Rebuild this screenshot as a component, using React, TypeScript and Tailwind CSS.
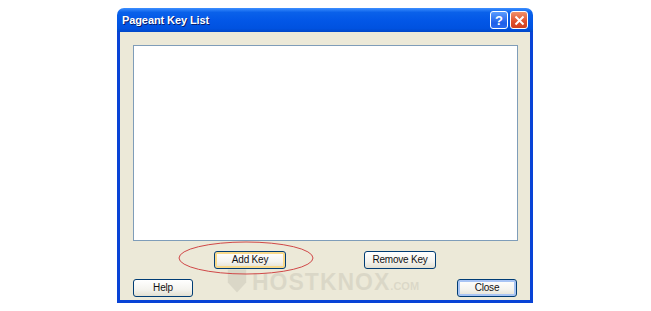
import React from "react";

const btn =
  "h-[18px] rounded-[3px] border border-[#003c74] bg-[linear-gradient(to_bottom,#ffffff_0%,#f4f3ee_60%,#e3e0d2_100%)] text-[10px] tracking-[-0.2px] text-[#111] flex items-center justify-center leading-none";

export default function App() {
  return (
    <div
      className="relative w-[651px] h-[311px] bg-white overflow-hidden"
      style={{ fontFamily: '"Liberation Sans", Arial, sans-serif' }}
    >
      <div className="relative ml-[117px] pt-[8px] w-[416px] h-[303px] flex flex-col">
        {/* Title bar */}
        <div className="h-[24px] rounded-t-[7px] bg-[linear-gradient(to_bottom,#3d8fff_0%,#0a61ea_18%,#0256e6_55%,#0052e0_85%,#0047c8_100%)] flex items-center pl-[5px] pr-[5px]">
          <span className="text-white font-bold text-[11px] tracking-[-0.1px] [text-shadow:1px_1px_0_#0a1e6e]">
            Pageant Key List
          </span>
          <div className="ml-auto flex gap-[2px]">
            <div className="w-[18px] h-[18px] rounded-[3px] border border-white bg-[linear-gradient(to_bottom,#5a9cff,#1e5ee8_70%,#2a6cf0)] flex items-center justify-center">
              <span className="text-white font-bold text-[13px] leading-none">?</span>
            </div>
            <div className="w-[18px] h-[18px] rounded-[3px] border border-white bg-[linear-gradient(to_bottom,#f0906a,#e0502c_60%,#d04020)] flex items-center justify-center">
              <svg width="11" height="11" viewBox="0 0 11 11">
                <path d="M1.5 1.5 L9.5 9.5 M9.5 1.5 L1.5 9.5" stroke="white" strokeWidth="2" />
              </svg>
            </div>
          </div>
        </div>
        {/* Body */}
        <div className="flex-1 border-x-[3px] border-b-[3px] border-[#0843d6] bg-[#ece9d8] flex flex-col pt-[13px] pl-[13px] pr-[12px]">
          <div className="w-[385px] h-[196px] bg-white border border-[#7f9db9]" />
          <div className="flex mt-[10px] pl-[81px] gap-[78px]">
            <div className={`${btn} w-[72px] shadow-[inset_0_0_0_2px_#f8d98a]`}>Add Key</div>
            <div className={`${btn} w-[72px]`}>Remove Key</div>
          </div>
          <div className="flex justify-between mt-[10px] pr-[1px]">
            <div className={`${btn} w-[60px]`}>Help</div>
            <div className={`${btn} w-[60px] shadow-[inset_0_0_0_2px_#a8c4f4]`}>Close</div>
          </div>
        </div>
      </div>

      {/* Watermark overlay */}
      <div className="absolute left-[226px] top-[268px] flex items-end opacity-[0.07] pointer-events-none">
        <svg width="22" height="26" viewBox="0 0 28 34">
          <path d="M2 2 H26 V19 L14 32 L2 19 Z" fill="#000" />
        </svg>
        <span className="ml-[4px] text-[23px] font-bold text-black leading-none tracking-[1px]">HOSTKNOX</span>
        <span className="text-[11px] font-bold text-black leading-none mb-[2px]">.COM</span>
      </div>

      {/* Red annotation ellipse */}
      <svg className="absolute left-0 top-0 pointer-events-none" width="651" height="311">
        <ellipse cx="246" cy="258" rx="67" ry="16" fill="none" stroke="#d04848" strokeWidth="1" />
      </svg>
    </div>
  );
}
